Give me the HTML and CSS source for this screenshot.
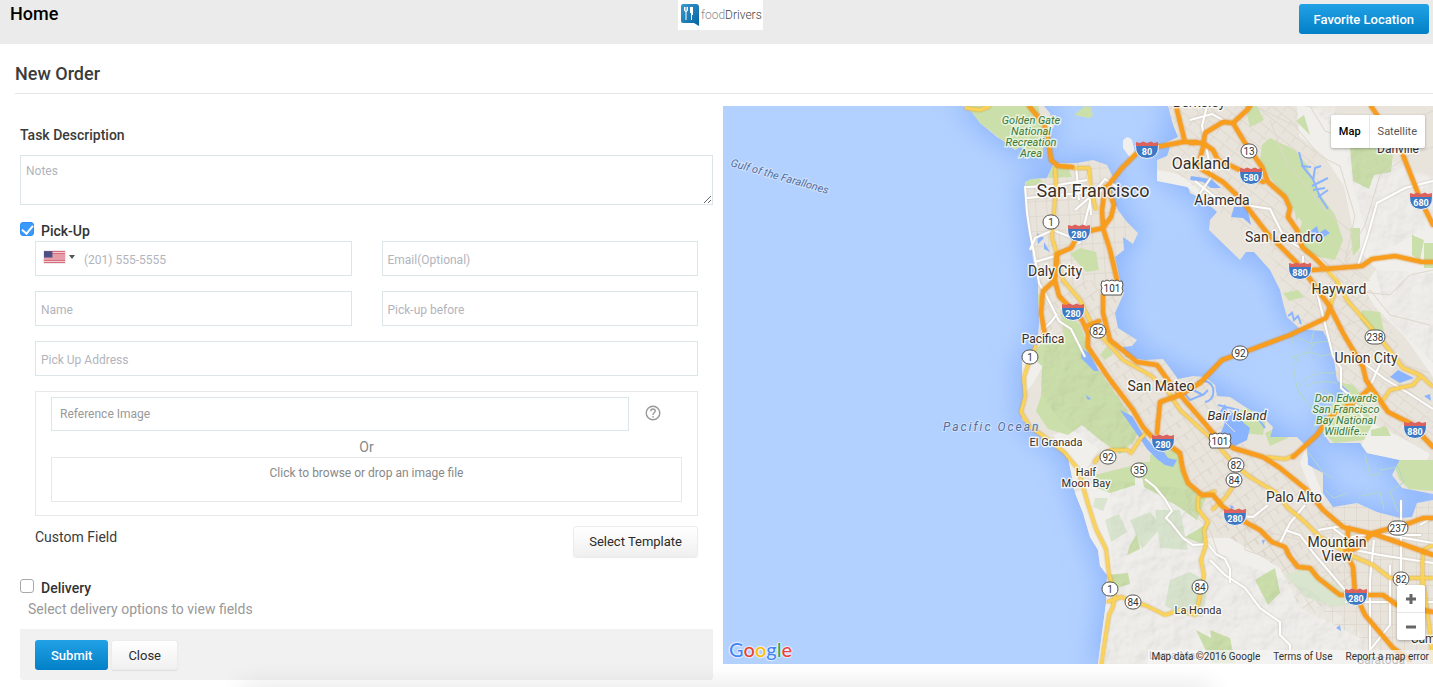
FILE: index.html
```html
<!DOCTYPE html>
<html lang="en">
<head>
<meta charset="utf-8">
<title>New Order</title>
<link rel="stylesheet" href="styles.css">
</head>
<body>
<header class="topbar">
  <h1 class="topbar-title">Home</h1>
  <div class="logo">
    <svg class="logo-mark" viewBox="0 0 20 24" aria-hidden="true">
      <defs><linearGradient id="lg" x1="0" y1="0" x2="1" y2="1"><stop offset="0" stop-color="#3a9ad0"/><stop offset="1" stop-color="#06629f"/></linearGradient></defs>
      <path fill="url(#lg)" d="M3 1h13q3 0 3 3v19l-5-3H3q-2 0-2-2V3q0-2 2-2z"/>
      <path stroke="#fff" fill="none" d="M4.500 4v3q0 1.500 1.500 1.500T7.500 7V4M6 4v13" stroke-width="1"/><path fill="#fff" d="M10 4h3v8h-1v5h-1V10h-1z"/>
    </svg>
    <span class="logo-text">food<span class="logo-strong">Drivers</span></span>
  </div>
  <button type="button" class="btn btn-primary topbar-action">Favorite Location</button>
</header>

<h2 class="page-title">New Order</h2>

<main class="content">
  <form class="order">
    <label class="label" for="notes">Task Description</label>
    <textarea class="field notes" id="notes" placeholder="Notes"></textarea>

    <label class="check"><input type="checkbox" checked><span>Pick-Up</span></label>
    <div class="fields">
      <div class="field phone">
        <button type="button" class="country" aria-label="Country: United States">
          <svg class="flag" viewBox="0 0 20 11" aria-hidden="true"><path fill="#fff" d="M0 0h20v11H0z"/><path stroke="#cc3f50" d="M0 .5h20M0 2.500h20M0 4.500h20M0 6.500h20M0 8.500h20M0 10.500h20"/><path fill="#4b4f85" d="M0 0h8v6H0z"/></svg>
          <span class="caret"></span>
        </button>
        <input class="phone-input" type="tel" placeholder="(201) 555-5555" aria-label="Phone">
      </div>
      <input class="field" type="email" placeholder="Email(Optional)" aria-label="Email">
      <input class="field" type="text" placeholder="Name" aria-label="Name">
      <input class="field" type="text" placeholder="Pick-up before" aria-label="Pick-up before">
      <input class="field wide" type="text" placeholder="Pick Up Address" aria-label="Pick Up Address">
    </div>

    <div class="reference">
      <div class="reference-row">
        <input class="field reference-input" type="text" placeholder="Reference Image" aria-label="Reference Image">
        <button type="button" class="help" aria-label="Help"><svg viewBox="0 0 16 16" aria-hidden="true"><circle cx="8" cy="8" r="6.800"/><path d="M5.800 6.300Q5.800 4 8 4t2.200 2.100Q10.200 7.200 9 8T8 10"/><path d="M8 11v1.500"/></svg></button>
      </div>
      <div class="or">Or</div>
      <button type="button" class="drop">Click to browse or drop an image file</button>
    </div>

    <div class="custom"><span class="custom-title">Custom Field</span><button type="button" class="btn btn-plain">Select Template</button></div>

    <label class="check delivery"><input type="checkbox"><span>Delivery</span></label>
    <p class="hint">Select delivery options to view fields</p>

    <div class="actions"><button type="submit" class="btn btn-primary">Submit</button><button type="button" class="btn btn-plain">Close</button></div>
  </form>

  <section class="map" aria-label="Map">
    <svg class="map-canvas" viewBox="723 106 710 558" preserveAspectRatio="xMidYMid slice">
      <defs>
        <filter id="blur" x="-20%" y="-20%" width="140%" height="140%"><feGaussianBlur stdDeviation="14"/></filter>
        <filter id="soft"><feGaussianBlur stdDeviation="8"/></filter>
        <filter id="relief" x="0" y="0" width="100%" height="100%"><feTurbulence type="fractalNoise" baseFrequency="0.055" numOctaves="3" seed="4"/><feDiffuseLighting surfaceScale="3" lighting-color="#fff"><feDistantLight azimuth="225" elevation="60"/></feDiffuseLighting><feComposite in2="SourceGraphic" operator="in"/></filter>
        <pattern id="g1" width="11" height="15" patternUnits="userSpaceOnUse" patternTransform="rotate(-3)"><path class="st" d="M0 0H11M0 0V15"/></pattern>
        <pattern id="g2" width="13" height="10" patternUnits="userSpaceOnUse" patternTransform="rotate(38)"><path class="st" d="M0 0H13M0 0V7"/></pattern>
        <pattern id="g3" width="14" height="17" patternUnits="userSpaceOnUse" patternTransform="rotate(56)"><path class="st" d="M0 0H14M0 0V17M0 9H7"/></pattern>
        <pattern id="g4" width="12" height="13" patternUnits="userSpaceOnUse"><path class="st" d="M0 0H12M0 0V13"/></pattern>
        <path id="pen" d="M1053 165L1060 163 1077 163 1093 160 1107 165 1113 177 1110 190 1118 210 1127 222 1138 233 1133 244 1123 237 1124 250 1115 257 1120 280 1124 293 1115 313 1118 328 1137 340 1132 346 1123 347 1126 357 1145 360 1163 359 1170 368 1178 379 1193 376 1205 377 1215 385 1217 396 1230 397 1250 410 1263 417 1273 427 1270 437 1297 437 1307 447 1308 465 1323 473 1323 493 1333 507 1357 503 1377 512 1400 518 1412 517 1417 503 1433 500V664H1098L1102 633 1106 603 1107 575 1100 566 1098 550 1090 537 1083 513 1075 493 1070 467 1067 455 1055 447 1043 439 1032 427 1022 420 1021 407 1025 397 1022 380 1022 358 1037 347 1039 323 1038 297 1038 280 1033 260 1030 233 1027 210 1025 182 1032 179 1047 178Z"/>
        <path id="east" d="M1168 106L1173 125 1178 137 1163 144 1153 148 1170 147 1167 156 1157 160 1157 171 1175 184 1188 186 1190 193 1204 200 1217 212 1210 220 1209 230 1240 260 1246 252 1254 252 1270 270 1280 290 1283 303 1287 317 1300 329 1323 331 1332 347 1337 380 1350 392 1340 398 1331 405 1321 430 1330 443 1360 443 1367 453 1400 460 1392 475 1402 488 1433 494V106Z"/>
        <path id="marin" d="M963 106L972 112 980 123 997 137 1008 144 1015 150 1022 146 1032 157 1043 155 1042 137 1054 127 1050 113 1044 106Z"/>
        <clipPath id="land"><use href="#pen"/><use href="#east"/><use href="#marin"/></clipPath>
        <g id="interstate"><path fill="#3d78c4" stroke="#f5f5f5" d="M-11.500-4.500H11.500Q12 8 0 8.500Q-12 8-11.500-4.500Z"/><path fill="#dc625e" d="M-11-8l4 1 3-1.500 4 1.500 4-1.500 3 1.500 4-1V-4h-22z"/></g>
        <rect id="pill" x="-8" y="-7" width="16" height="14" rx="7"/>
        <rect id="pillw" x="-10" y="-7" width="20" height="14" rx="7"/>
        <path id="us" d="M-10-7q3 1 5-1 2 2 5 0 3 2 5 0 2 2 5 1l1 4q-2 3 0 6l-2 4h-18l-2-4q2-3 0-6z"/>
      </defs>
      <path fill="#b3d1ff" d="M0 0H2000V1200H0Z"/>
      <g filter="url(#blur)" fill="#84aefb" stroke="#84aefb" stroke-width="10" opacity=".8"><use href="#pen"/><use href="#east"/><use href="#marin"/></g>
      <path fill="#afcfff" filter="url(#soft)" d="M1150 235l35-10 25 30 40 30 20 45-10 45-40-5-60-35-20-45z" opacity=".7"/>
      <g fill="#e8e3db"><use href="#pen"/><use href="#east"/><use href="#marin"/><path fill="#f0efeb" d="M1123 141q4-7 9-1l3 13-4 6-8-11z"/><path fill="#cbdfab" d="M1074 115l11-9 6 1 2 9-4 2z"/></g>
      <path fill="#f0efeb" d="M1157 170l17 3 21 9 10 8-4 10-14-13-30-6z"/>

      <g clip-path="url(#land)">
        <path fill="url(#g1)" d="M1020 160h110v125h-100z"/>
        <path fill="url(#g2)" d="M1155 106h155l15 110 60 100 55 120-45 15-90-90-30-100-100-90z"/>
        <path fill="url(#g3)" d="M1040 280h95l70 90 40 75 65 40 50 110-50 20-100-90-50-60-70-70-50-80z"/>
        <path fill="url(#g4)" d="M1325 500h110v165h-70l-45-60z"/>
        <path fill="url(#g3)" d="M1220 510l60 25 45 65-40-20-55-15z"/>

        <g fill="#f0efeb">
          <path d="M1237 106h60l2 30 25 20 20 30 12 60 15 18 25 20 38-25v-80l-60-20-20-40-50-13z"/>
          <path d="M1433 262l-55 5-15 20 12 20 30 30 28 40z"/>
          <path d="M1073 493l20-35 30-40-10-13-20 15-40 15 15 20zM1075 493l35-20 80 15 10 50 30 0 50 30 20 40 60 30 5 38h-270l7-90z"/>
          <path d="M1366 420l40 20 24 14-5 10-65-8zM1305 450l20 50 15 8-28-15-12-30z"/>
          <path d="M1022 358l15-11 8 15-12 22-10 10z"/>
        </g>
        <g fill="#cbdfab">
          <path d="M963 106l17 17 35 27 7-4 10 11 11-2 1-20-6-31z"/>
          <path d="M1048 178l5-15 14 2 5 12zM1025 180l14-2 5 5-18 4z"/>
          <path d="M1262 145l8-7 25 12 12 15 10 25 18 25 8 25-8 20-30-6-8-14 5-18-15-22-15-20-12-20z"/>
          <path d="M1350 148l25-12 18 18-2 18-17 3-5 14-16-8zM1245 106h12l7 14-14 7zM1296 121l8-6 6 20z"/>
          <path d="M1045 340l35 0 10 45 25 35 20 20-15 14-20-14-18-15-14 10-20-6-12-18 5-15 1-30-12-10z"/>
          <path d="M1060 310l20 15 15 40 25 35 20 30-8 15-26-25-40-70zM1139 462l40 0 8 25 20 8-10 25-28-20-25-13z"/>
          <path d="M1150 455l20-9 12 10 3 20 12 18-8 16-24-10-15-15z"/>
          <path d="M1095 475l40-10 0 20-25 8-15-6zM1106 575l22-2 2 11-20 6zM1130 545l7-11 3 15-13 6zM1185 537l25-15-8 22zM1255 580l20-12 5 25-12 12z"/>
          <path d="M1196 630l15 8 15 20-14 5zM1210 630l20 8 5 25h-20zM1353 385l-20-4-2 25-12 22 15 15 30-3 8-15-10-30zM1394 465l5 14 10 10 24 2v-31l-33 0z"/>
          <path d="M1100 355l7-9 6 8-8 6zM1080 248l16 4 3 18-13 2-16-18zM1028 295l10-2 8 10-14 1zM1118 425l10-5 10 5-4 10zM1165 360l9-2 4 7-6 4z"/>
          <path d="M1283 293l15-3 6 7-15 4zM1362 310l18 2 4 20-12 2-12-14zM1350 228l10 0 0 20-7 8zM1412 235l12 5-4 20-8-5zM1424 243h9v25h-9zM1371 430l15-4 5 10-20 0zM1225 418l30-15 12 12-4 20-34-3zM1265 433l15-7 8 12-18 8zM1295 210l13-4-12 14z"/>
        </g>
        <g fill="#dae5cf">
          <path d="M1130 520l20-8 12 15-20 22zM1105 520l14-6 8 18-16 10zM1170 580l20-8 18 10-5 35-23-2-15-10zM1155 510l25 0 8 40-28-2zM1285 575l20-7 45 25 5 10-20 4-30-10zM1095 498l13 0-5 13-10-4z"/>
        </g>
        <path filter="url(#relief)" fill="#000" opacity=".25" style="mix-blend-mode:multiply" d="M1045 345l40-4 45 70 15 30-30 20-55-40-20-30zM1110 480l85 10 15 60 100 40 70 60v14H1105l7-90zM1310 106h25l18 80 20 70 60-30v-50l-80-30zM1375 270l58 3v90l-45-45z"/>

        <g fill="#8bb4fe">
          <path d="M1081 348l8 5 10 18-5 0-13-13zM1120 410l12 6 10 17 10 12 12 7 4 6 9 2-4 7-8-2-8-6-10-10-8-12zM1086 395l4 3 1-3-1 5-3-1z"/>
          <path d="M1191 176l20 3 10 9-10 0-8-6-13-2zM1234 207l13 0 4 18-8-7-12-1zM1037 233l7 5-6 6zM1044 242l6 10-6-3z"/>
          <path d="M1390 377l8-7 8 4 8 4-14 5zM1424 396l6-2 1 7zM1218 440l12-30 10 10 10 8-3 12-12 6z"/>
          <path d="M1225 404l5 15 12 0 6 14-5 6-15-8-8-20zM1336 628l4-3 1 6zM1230 505l4 2-3 3zM1262 540l3 0-2 5z"/>
          <path d="M1309 232l8-6 2 7 6-4 5 4-12 8-8-4z"/>
        </g>
        <path d="M1299 152l4 15 10 12 7 18 8 12M1301 166l10 1M1313 181l2-13 6-2M1312 186l16-8M1313 190l12-2M1318 197l10-7" fill="none" stroke="#8bb4fe" stroke-width="2"/>
        <g fill="none" stroke="#ddd7cc" stroke-width="1">
          <path d="M1255 106l40 20 25 30 20 10 15 50-10 45 25 20M1310 106l15 25 30 10 40-15 38-15M1345 260l20-35 15-50 30-20 23-8M1345 290l45 5 20-20 23-5M1340 310l30-20 20 25 40 10M1335 330l25-10 35 40 38 20M1355 360l30-20 20 25 25 8M1270 120l15 40 40 50 30 25"/>
          <path d="M1215 515l30 10 0 25 30 10M1240 500l20 30 40 10M1270 500l-20 30M1190 510l20 20 10 30M1200 490l-20 30"/>
        </g>
      </g>

      <g fill="none" stroke="#b4d6c6" stroke-width="1">
        <path d="M1293 330l-2 25 8 5-6 4 4 25 15 20 16 22M1292 358l18-6 12 4 14-3M1297 337l17 8-10 8M1314 330l-3 13 20-2M1300 385q10-15 35-12M1305 387q12-8 32-4M1315 400l8-10 10 5M1312 430l20-25M1300 392l10 15"/>
        <path d="M1380 470l18-3 6 15-14 10 8 20M1365 454l5 22 12-3M1362 496l18-4 4 18M1308 452l15 20 10 7M1325 490l8 8 15-5"/>
      </g>
      <g fill="none" stroke="#8bb4fe" stroke-width="2"><path d="M1197 382q12-4 16 6 2 12-8 14M1193 390l10 5 5-5M1218 405l20 5-6 16M1247 418q10-4 18 10M1288 316l4-3 2 7 4-4 3 8M1178 385l12 15 12-5"/></g>
      <g fill="none" stroke="#e8e3db" stroke-width="1"><path d="M1240 420q8-8 14 2M1225 422l10 10"/></g>

      <g class="rw">
        <path d="M1025 186l2 27 3 20 4 20 5 30 10 18 10 20 12 8 14 28M1026 187l26-1 35-6M1027 198l75-7M1030 250l5-12 18-8 20 8 12 2M1035 262l20-6 25-14 10-40M1075 210l15-13 15-18 12 8M1076 165l3 35M1088 175l3 40"/>
        <path d="M1057 314l-6 8-10 10M1207 106l-5 20 10 50-14 20M1190 120l22-6 18 10M1195 181l25 20 50 8 15 30 35 20 30 35M1305 270l13 26 15 60 8 12 0 20 12 10 10 20M1358 265l10-30 9-32 28-15 28-7M1365 364l20 15 25 15 23 15M1380 364l-8 18-12 20M1303 271v-15"/>
        <path d="M1145 479l10 8 10 12 7 12-6 7 5 5 12 15 10 7 15-1 8 10 9 5 5 10 0 14M1210 560l15 15 20 13 15 20 20 14 0 13 10 10 0 20M1240 516l13 1 15-12M1280 543l10-20 15-18M1285 530l15 5 15 20 30 35M1333 528l13 10 30-5 57 10M1330 545l50 10 53 8M1374 540l-4 40 0 70M1318 530l30-5M1401 500v100M1345 602h88M1390 565v60l-20 25M1420 525l13-8M1401 535h20"/>
      </g>

      <g class="ry">
        <path d="M965 108l15 2 10-4M1055 168l1 15-2 30-2 25 5 15-2 20M1073 168h16l2 22 5 20M1036 345l-6 15-6 17 1 20-4 15 9 15 12 8 22 17 14 17 10 35 8 25 10 20 3 25 6 20-2 13-4 8-4 25-5 35M1107 602l14-5 14 5 12 4 18 9 15-5 15 5 3-10 6-30-3-15 5-15-2-15 4-8-10-13 0-12 18-6M1094 463l4-5 12-8 18 0 3 3 10-15 5-5"/>
        <path d="M1055 253L1063 280 1080 300 1093 327 1123 360 1150 375 1167 390 1180 410 1213 440 1233 463 1250 477 1277 493 1287 507 1305 522 1320 537 1350 555 1373 565 1390 578H1433"/>
        <path d="M1325 268L1338 282 1347 300 1367 323 1387 347 1403 368 1420 375 1433 387M1420 377L1413 385 1390 390 1383 400M1338 282L1330 307M1267 457l18 2 10-4M1212 510l14-13 10-15M1422 560l1 20 8 60 2 24M1433 545l-10 5-2 80"/>
      </g>

      <g class="ro">
        <path d="M1029 106L1044 124 1049 142 1051 160 1058 166 1072 167M1107 187L1122 168 1140 150 1183 142M1176 106L1185 142H1197"/>
        <path d="M1190 143H1203L1213 150 1218 160 1240 170 1263 182M1247 110L1233 123 1223 122 1205 133 1203 147 1198 167 1223 182 1240 198 1267 233 1297 263 1313 283 1330 307 1343 333 1363 367 1366 380 1388 412 1410 423 1433 447M1250 106L1247 110"/>
        <path d="M1233 123L1245 143 1262 167 1268 182 1285 197 1290 208 1288 217 1297 230 1302 247 1315 258 1325 268M1300 271L1325 269 1362 266 1372 259 1395 256 1422 262H1433M1371 106L1379 118M1403 155L1421 201 1433 225"/>
        <path d="M1105 187L1102 210 1103 228 1110 250 1117 280M1108 188L1114 205 1111 217 1103 228 1080 233 1071 248 1057 254 1055 280 1043 291 1041 313 1045 335M1055 280L1059 296 1082 320 1088 333V347L1108 377 1133 410 1143 427 1152 437 1173 448 1180 453 1183 470 1188 483 1202 495H1213L1223 507 1247 523 1260 530 1272 542 1285 547 1290 557 1298 567 1310 568 1318 578 1340 595H1383L1397 605 1433 612M1085 327L1099 321"/>
        <path d="M1103 295V313L1110 340 1137 362 1157 365 1170 383 1213 433 1233 448 1263 457 1280 468 1307 490 1323 510 1343 527 1377 535 1433 555M1330 307L1326 318 1290 335 1250 350 1222 360 1200 383 1180 395 1160 402 1157 433M1370 388L1357 400 1330 417 1317 435 1293 457"/>
        <path d="M1348 528V557L1353 567 1355 593 1365 615 1393 648 1410 660M1345 552L1357 548 1373 533 1410 523 1423 518H1433"/>
      </g>

      <g class="shields">
        <g transform="translate(1147 150)"><use href="#interstate"/><text y="5">80</text></g>
        <g transform="translate(1079 233)"><use href="#interstate"/><text y="5">280</text></g>
        <g transform="translate(1251 176)"><use href="#interstate"/><text y="5">580</text></g>
        <g transform="translate(1421 201)"><use href="#interstate"/><text y="5">680</text></g>
        <g transform="translate(1300 271)"><use href="#interstate"/><text y="5">880</text></g>
        <g transform="translate(1073 312)"><use href="#interstate"/><text y="5">280</text></g>
        <g transform="translate(1163 443)"><use href="#interstate"/><text y="5">280</text></g>
        <g transform="translate(1415 430)"><use href="#interstate"/><text y="5">880</text></g>
        <g transform="translate(1235 517)"><use href="#interstate"/><text y="5">280</text></g>
        <g transform="translate(1356 597)"><use href="#interstate"/><text y="5">280</text></g>
      </g>
      <g class="routes">
        <g transform="translate(1051 222)"><use href="#pill"/><text y="4">1</text></g>
        <g transform="translate(1249 151)"><use href="#pill"/><text y="4">13</text></g>
        <g transform="translate(1112 288)"><use href="#us"/><text y="4">101</text></g>
        <g transform="translate(1098 331)"><use href="#pill"/><text y="4">82</text></g>
        <g transform="translate(1030 357)"><use href="#pill"/><text y="4">1</text></g>
        <g transform="translate(1240 353)"><use href="#pill"/><text y="4">92</text></g>
        <g transform="translate(1375 337)"><use href="#pillw"/><text y="4">238</text></g>
        <g transform="translate(1220 441)"><use href="#us"/><text y="4">101</text></g>
        <g transform="translate(1108 457)"><use href="#pill"/><text y="4">92</text></g>
        <g transform="translate(1139 470)"><use href="#pill"/><text y="4">35</text></g>
        <g transform="translate(1236 465)"><use href="#pill"/><text y="4">82</text></g>
        <g transform="translate(1234 480)"><use href="#pill"/><text y="4">84</text></g>
        <g transform="translate(1398 528)"><use href="#pillw"/><text y="4">237</text></g>
        <g transform="translate(1401 579)"><use href="#pill"/><text y="4">82</text></g>
        <g transform="translate(1110 589)"><use href="#pill"/><text y="4">1</text></g>
        <g transform="translate(1133 602)"><use href="#pill"/><text y="4">84</text></g>
        <g transform="translate(1200 587)"><use href="#pill"/><text y="4">84</text></g>
      </g>
      <g class="places">
        <text class="xl" x="1093" y="197">San Francisco</text>
        <text class="lg" x="1201" y="169">Oakland</text>
        <text class="md" x="1199" y="107">Berkeley</text>
        <text class="md" x="1222" y="205">Alameda</text>
        <text class="md" x="1284" y="242">San Leandro</text>
        <text class="md" x="1339" y="294">Hayward</text>
        <text class="md" x="1366" y="363">Union City</text>
        <text class="md" x="1055" y="276">Daly City</text>
        <text class="md" x="1161" y="391">San Mateo</text>
        <text class="md" x="1294" y="502">Palo Alto</text>
        <text class="md" x="1337" y="547">Mountain</text>
        <text class="md" x="1337" y="561">View</text>
        <text class="sm" x="1398" y="153">Danville</text>
        <text class="sm" x="1043" y="343">Pacifica</text>
        <text class="xs" x="1056" y="446">El Granada</text>
        <text class="xs" x="1086" y="476">Half</text>
        <text class="xs" x="1086" y="487">Moon Bay</text>
        <text class="xs" x="1198" y="614">La Honda</text>
        <text class="sm" x="1436" y="643">Campbell</text>
        <text class="xs" x="1174" y="659">Loma Mar</text>
        <text class="sm" x="1381" y="664">Saratoga</text>
        <text class="island" x="1237" y="420">Bair Island</text>
      </g>
      <g class="parks">
        <text x="1031" y="124">Golden Gate</text><text x="1031" y="135">National</text><text x="1031" y="146">Recreation</text><text x="1031" y="157">Area</text>
        <text x="1346" y="402">Don Edwards</text><text x="1346" y="413">San Francisco</text><text x="1346" y="424">Bay National</text><text x="1346" y="435">Wildlife...</text>
      </g>
      <g class="waters">
        <text class="ocean" x="943" y="431">Pacific Ocean</text>
        <text class="gulf" transform="translate(730 166) rotate(16)">Gulf of the Farallones</text>
      </g>
    </svg>
    <div class="map-types"><button type="button" class="active">Map</button><button type="button">Satellite</button></div>
    <div class="map-zoom"><button type="button" aria-label="Zoom in"><svg viewBox="0 0 12 12"><path d="M1 6h10M6 1v10"/></svg></button><button type="button" aria-label="Zoom out"><svg viewBox="0 0 12 12"><path d="M1 6h10"/></svg></button></div>
    <a class="google" href="#"><span class="b">G</span><span class="r">o</span><span class="y">o</span><span class="b">g</span><span class="g">l</span><span class="r">e</span></a>
    <div class="credits"><span>Map data ©2016 Google</span><a href="#">Terms of Use</a><a href="#">Report a map error</a></div>
  </section>
</main>
</body>
</html>
```
FILE: styles.css
```css
* { box-sizing: border-box; }
body { margin: 0; background: #fff; color: #3b3b3b; font: 14px/20px Roboto, "Liberation Sans", sans-serif; }
body::after { content: ""; position: fixed; left: 250px; right: 230px; bottom: -8px; height: 1px; box-shadow: 0 0 26px 8px rgba(0, 0, 0, .12); pointer-events: none; }
button, input, textarea { font: inherit; color: inherit; margin: 0; }
button { cursor: pointer; }

.topbar { display: grid; grid-template-columns: 1fr auto 1fr; align-items: start; height: 44px; padding: 0 4px 0 10px; background: #ebebeb; }
.topbar-title { margin: 4px 0 0; font-size: 18px; line-height: 20px; font-weight: 500; color: #000; }
.topbar-action { justify-self: end; margin-top: 4px; }
.logo { display: flex; align-items: center; height: 30px; width: 85px; margin-left: 2px; padding-left: 2px; background: #fff; white-space: nowrap; }
.logo-mark { width: 20px; height: 24px; margin-right: 1px; flex: none; }
.logo-text { font-size: 12px; line-height: 16px; font-weight: 300; color: #8a8a8a; }
.logo-strong { color: #444; }

.btn { height: 30px; padding: 0 16px; border: 1px solid transparent; border-radius: 3px; font-size: 13px; line-height: 20px; }
.btn-primary { padding: 1px 15px 0; border: 0; font-weight: 500; color: #fff; background: linear-gradient(#23a1e6, #0280c7); }
.actions .btn-primary { padding: 1px 16px 0; }
.btn-plain { padding: 0 15px; color: #2b2b2b; background: linear-gradient(#fff, #f0f0f0); border-color: #ececec; box-shadow: 0 1px 1px rgba(0, 0, 0, .08); }

.page-title { margin: 0 0 12px 15px; padding: 20px 0 9px; border-bottom: 1px solid #e5e8e8; font-size: 18px; line-height: 20px; font-weight: 500; }
.content { display: grid; grid-template-columns: 1fr 1fr; align-items: start; padding-left: 13px; }

.order { padding: 19px 10px 0 7px; }
.label { display: block; margin-bottom: 10px; font-weight: 500; }
.field { display: block; width: 100%; height: 35px; padding: 2px 5px 0; border: 1px solid #dce5e7; border-radius: 0; background: #fff; font-size: 12px; }
.field::placeholder, .phone-input::placeholder { color: #b2b4bd; opacity: 1; }
.notes { height: 50px; padding: 5px; resize: both; }
.check { display: flex; align-items: flex-start; gap: 7px; margin-top: 16px; font-weight: 500; color: #333; }
.check input { appearance: none; display: grid; place-items: center; width: 14px; height: 14px; margin-top: 1px; border: 1px solid #a9a9a9; border-radius: 3px; background: #fff; }
.check input:checked { border-color: #2f8df7; background: #3b99fc; }
.check input:checked::after { content: ""; width: 5px; height: 9px; margin-bottom: 2px; border: solid #fff; border-width: 0 2px 2px 0; rotate: 40deg; }
.fields { display: grid; grid-template-columns: 1fr 1fr; gap: 15px 30px; margin: 0 15px; }
.wide { grid-column: 1 / -1; }
.phone { display: flex; align-items: flex-start; padding: 0; }
.country { display: flex; align-items: center; gap: 4px; width: 48px; height: 30px; padding: 0 0 0 8px; border: 0; background: none; flex: none; }
.flag { width: 21px; height: 12px; box-shadow: 0 0 1px #888; }
.caret { border: solid transparent; border-width: 4px 3px 0; border-top-color: #555; }
.phone-input { flex: 1; min-width: 0; height: 33px; padding: 2px 0 0; border: 0; background: none; }

.reference { margin: 15px 15px 0; padding: 5px 15px 13px; border: 1px solid #e8e8e8; }
.reference-row { display: flex; align-items: center; }
.reference-input { flex: 1; height: 34px; padding: 0 8px; }
.reference-input::placeholder { color: #999; }
.help { width: 16px; height: 16px; margin: 0 21px 2px 16px; padding: 0; border: 0; background: none; }
.help svg { display: block; fill: none; stroke: #999; stroke-width: 1.4; }
.or { padding-top: 6px; text-align: center; color: #888; }
.drop { display: block; width: 100%; height: 45px; padding: 5px 0 19px; border: 1px solid #e8e8e8; background: #fff; color: #888; font-size: 12px; line-height: 20px; }

.custom { display: flex; justify-content: space-between; align-items: flex-start; margin: 10px 15px 0; }
.custom-title { padding-top: 1px; }
.custom .btn { height: 31px; }
.delivery { margin-top: 21px; }
.hint { margin: 1px 0 10px; padding-left: 8px; color: #999; }
.actions { display: flex; gap: 3px; padding: 11px 15px 10px; border-radius: 0 0 3px 3px; background: #f1f1f1; }
.actions .btn-plain { padding: 2px 16px 0; }

.map { position: relative; overflow: hidden; aspect-ratio: 710 / 558; }
.map-canvas { display: block; width: 100%; height: 100%; }
.st { fill: none; stroke: #d8d1c6; stroke-width: 1; }
.rw { fill: none; stroke: #fff; stroke-width: 2; filter: drop-shadow(0 0 1px #c8c2b8); }
.ry { fill: none; stroke-linejoin: round; stroke-width: 3; stroke: #fad45a; filter: drop-shadow(0 0 1px #d99b27); }
.ro { fill: none; stroke-linejoin: round; stroke-linecap: round; stroke-width: 4; stroke: #f99d1c; filter: drop-shadow(0 0 1px #d97b0a); }
.map-canvas text { text-anchor: middle; font-family: Roboto, "Liberation Sans", sans-serif; }
.shields text { font-size: 9px; font-weight: 700; fill: #fff; }
.routes { fill: #fff; stroke: #555; stroke-width: 1; }
.routes text { font-size: 10px; fill: #333; stroke: none; }
.places text { fill: #38312a; stroke: rgba(255, 255, 255, .75); stroke-width: 3px; stroke-linejoin: round; paint-order: stroke; }
.xl { font-size: 18px; }
.lg { font-size: 16px; }
.md { font-size: 14px; }
.sm { font-size: 12px; }
.xs { font-size: 11px; }
.island { font-size: 13px; font-style: italic; }
.parks text { font-size: 11px; font-style: italic; fill: #397a3e; stroke: rgba(240, 248, 230, .8); stroke-width: 3px; paint-order: stroke; }
.waters { font-style: italic; fill: #526f9c; stroke: rgba(215, 230, 255, .8); stroke-width: 2px; paint-order: stroke; }
.map-canvas .waters text { text-anchor: start; paint-order: stroke; }
.ocean { font-size: 12px; letter-spacing: 2px; }
.gulf { font-size: 11px; }

.map-types { position: absolute; top: 9px; right: 8px; display: flex; height: 33px; border-radius: 2px; background: #fff; box-shadow: 0 1px 3px rgba(0, 0, 0, .3); }
.map-types button { padding: 0 8px; border: 0; background: none; color: #565656; font-size: 11px; }
.map-types button + button { border-left: 1px solid #e6e6e6; }
.map-types .active { font-weight: 500; color: #000; }
.map-zoom { position: absolute; right: 8px; bottom: 24px; width: 28px; border-radius: 2px; background: #fff; box-shadow: 0 1px 3px rgba(0, 0, 0, .3); }
.map-zoom button { display: grid; place-items: center; width: 100%; height: 27px; padding: 0; border: 0; background: none; }
.map-zoom button + button { height: 28px; border-top: 1px solid #e6e6e6; }
.map-zoom svg { width: 12px; height: 12px; stroke: #666; stroke-width: 3; }
.google { position: absolute; left: 6px; bottom: 3px; font: 500 20px/24px Lato, sans-serif; text-decoration: none; text-shadow: 0 0 2px #fff, 0 0 2px #fff, 0 0 2px #fff; }
.b { color: #4285f4; }
.r { color: #ea4335; }
.y { color: #fbbc05; }
.g { color: #34a853; }
.credits { position: absolute; right: 0; bottom: 0; display: flex; gap: 13px; padding: 0 4px 0 3px; background: rgba(245, 245, 245, .72); font-size: 10px; line-height: 14px; color: #333; white-space: nowrap; }
.credits a { color: inherit; text-decoration: none; }
```
